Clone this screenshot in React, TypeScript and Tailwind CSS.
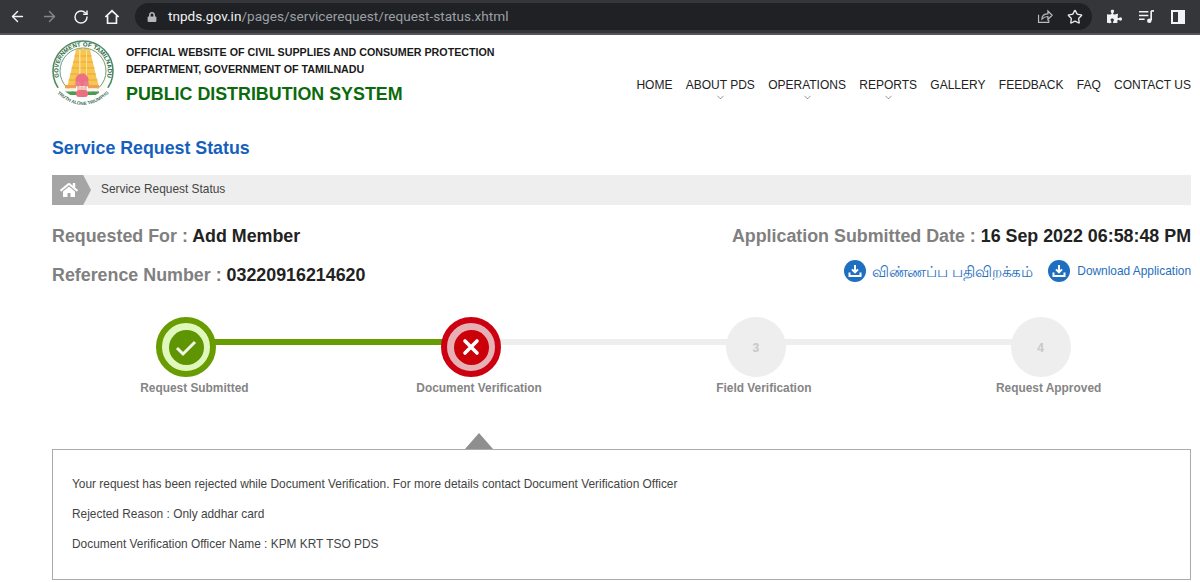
import { ArrowLeft, ArrowRight, ChevronDown, RotateCw, Star } from 'lucide-react';
import { FaHome, FaLock, FaPuzzlePiece } from 'react-icons/fa';

const NAV = [
  { label: 'HOME' },
  { label: 'ABOUT PDS', more: true },
  { label: 'OPERATIONS', more: true },
  { label: 'REPORTS', more: true },
  { label: 'GALLERY' },
  { label: 'FEEDBACK' },
  { label: 'FAQ' },
  { label: 'CONTACT US' },
];

const STEPS = [
  { label: 'Request Submitted', state: 'done' },
  { label: 'Document Verification', state: 'rejected' },
  { label: 'Field Verification', state: '3' },
  { label: 'Request Approved', state: '4' },
];

function Emblem() {
  return (
    <svg viewBox="0 0 64 68" className="w-[64px] h-[68px] shrink-0">
      <defs>
        <path id="emblem-top" d="M11.9 47 A24.8 24.8 0 1 1 50.1 47" />
        <path id="emblem-bottom" d="M4 52 Q31 78 58 52" />
      </defs>
      <circle cx="31" cy="31" r="30" fill="#fbfcf6" stroke="#4f8a68" strokeWidth="1.6" />
      <circle cx="31" cy="31" r="23" fill="#fff" stroke="#6d9c80" strokeWidth="1" />
      <text fontSize="6" fontWeight="700" fill="#2f6b4a" fontFamily="'Liberation Sans', sans-serif" textAnchor="middle">
        <textPath href="#emblem-top" startOffset="50%">GOVERNMENT OF TAMILNADU</textPath>
      </text>
      <path d="M24 9h14l1.5 8 2 8 2 9 3 11H15.5l3-11 2-9 2-8z" fill="#f6c552" />
      <path d="M22.5 16h17M21 22h20M19.5 28h23M18 34h26M16.5 40h29" stroke="#e9ab35" strokeWidth="1.2" />
      <path d="M27 10h1.5v33H27zM34 10h1v33h-1z" fill="#fbe19a" />
      <path d="M13 45h11v3.5H13zM36 45h11v3.5H36z" fill="#f0a050" />
      <path d="M13 48.5h11v3H13zM36 48.5h11v3H36z" fill="#f7f7f0" />
      <path d="M13 51.5h11V55H13zM36 51.5h11V55H36z" fill="#4c9a4f" />
      <circle cx="30" cy="40" r="6.5" fill="#ec6f83" />
      <circle cx="26" cy="44" r="2.8" fill="#e9808f" />
      <circle cx="34" cy="44" r="2.8" fill="#e9808f" />
      <path d="M25 47h10v3H25z" fill="#f3c3b0" />
      <path d="M0 50L8 47Q31 70 54 47L62 50V68H0z" fill="#fff" />
      <rect x="24" y="50" width="12" height="7" rx="3" fill="#e9707f" />
      <text fontSize="4.6" fontWeight="700" fill="#3d6b50" fontFamily="'Liberation Sans', sans-serif" textAnchor="middle">
        <textPath href="#emblem-bottom" startOffset="50%">TRUTH ALONE TRIUMPHS</textPath>
      </text>
    </svg>
  );
}

function DownloadIcon() {
  return (
    <svg viewBox="0 0 22 22" className="w-[22px] h-[22px] shrink-0">
      <circle cx="11" cy="11" r="11" fill="#1f6fc0" />
      <path d="M11 5v7M8 9.4l3 3 3-3" fill="none" stroke="#fff" strokeWidth="2" />
      <path d="M5.5 12.5v3.5h11v-3.5" fill="none" stroke="#fff" strokeWidth="2" />
    </svg>
  );
}

function StepCircle({ state }: { state: string }) {
  if (state === 'done') {
    return (
      <div className="w-[60px] h-[60px] rounded-full border-[6px] border-[#689c00] bg-[#e0f8bb] flex items-center justify-center">
        <div className="w-[35px] h-[35px] rounded-full bg-[#5f9403] flex items-center justify-center">
          <svg viewBox="0 0 24 24" className="w-[24px] h-[24px]">
            <path d="M3 13l6 6L21 7" fill="none" stroke="#f2f7e6" strokeWidth="3" />
          </svg>
        </div>
      </div>
    );
  }
  if (state === 'rejected') {
    return (
      <div className="w-[60px] h-[60px] rounded-full border-[6px] border-[#cc0010] bg-[#e6b0b4] flex items-center justify-center">
        <div className="w-[35px] h-[35px] rounded-full bg-[#cc0008] flex items-center justify-center">
          <svg viewBox="0 0 20 20" className="w-[20px] h-[20px]">
            <path d="M4 4l12 12M16 4L4 16" fill="none" stroke="#fff" strokeWidth="3.6" strokeLinecap="round" />
          </svg>
        </div>
      </div>
    );
  }
  return (
    <div className="w-[60px] h-[60px] rounded-full bg-[#eeeeee] flex items-center justify-center text-[12px] font-bold text-[#c8c8c8] pt-[1px]">
      {state}
    </div>
  );
}

export default function App() {
  return (
    <div className="w-[1200px] h-[582px] overflow-hidden bg-white font-['Liberation_Sans',Arial,sans-serif]">
      <div className="h-[35px] bg-[#35363a] border-b-2 border-[#55565a] flex items-center text-[#f1f3f4]">
        <div className="w-[135px] flex items-center pl-[9px] shrink-0">
          <ArrowLeft size={17} strokeWidth={2} />
          <ArrowRight size={17} strokeWidth={2} className="ml-[15px] text-[#85878a]" />
          <RotateCw size={16} strokeWidth={2.2} className="ml-[15px]" />
          <svg viewBox="0 0 18 18" className="w-[16px] h-[16px] ml-[15px]">
            <path d="M1.5 9L9 2l7.5 7M4 7.5V16h10V7.5" fill="none" stroke="currentColor" strokeWidth="1.9" />
          </svg>
        </div>
        <div className="w-[957px] h-[27px] rounded-full bg-[#202124] flex items-center pl-[12px] pr-[9px] shrink-0">
          <FaLock size={10} className="text-[#b5b7ba]" />
          <div className="ml-[11px] text-[13.6px] font-['Roboto',sans-serif] text-[#9aa0a6]">
            <span className="text-[#f1f3f4]">tnpds.gov.in</span>/pages/servicerequest/request-status.xhtml
          </div>
          <svg viewBox="0 0 20 20" className="w-[17px] h-[17px] ml-auto text-[#b8babd]">
            <path d="M3 8v9h12v-3M7 13c0-4 3-6 7-6V3.5l5 5-5 5V10c-3 0-5 1-7 3z" fill="none" stroke="currentColor" strokeWidth="1.4" />
          </svg>
          <Star size={16} strokeWidth={2} className="ml-[14px] text-[#e8eaed]" />
        </div>
        <FaPuzzlePiece size={15} className="ml-[15px] text-[#f1f3f4]" />
        <svg viewBox="0 0 18 16" className="w-[17px] h-[15px] ml-[16px]">
          <path d="M1 3h10M1 7h10M1 11h6" stroke="#f1f3f4" strokeWidth="1.5" />
          <path d="M14 2v10" stroke="#f1f3f4" strokeWidth="1.8" />
          <path d="M14 2h3" stroke="#f1f3f4" strokeWidth="1.8" />
          <circle cx="12" cy="12.5" r="2.4" fill="#f1f3f4" />
        </svg>
        <div className="w-[14px] h-[14px] ml-[16px] border-2 border-[#f1f3f4] flex justify-end">
          <div className="w-[5px] bg-[#f1f3f4]" />
        </div>
      </div>

      <div className="h-[80px] pl-[52px] pr-[9px] flex">
        <div className="pt-[5px]">
          <Emblem />
        </div>
        <div className="ml-[10px] pt-[9px]">
          <div className="text-[10.7px] leading-[17px] font-bold text-[#1a1a1a]">
            OFFICIAL WEBSITE OF CIVIL SUPPLIES AND CONSUMER PROTECTION
          </div>
          <div className="text-[10.7px] leading-[17px] font-bold text-[#1a1a1a]">
            DEPARTMENT, GOVERNMENT OF TAMILNADU
          </div>
          <div className="text-[17.85px] leading-[24px] mt-[4px] font-bold text-[#0b6a0b]">
            PUBLIC DISTRIBUTION SYSTEM
          </div>
        </div>
        <div className="ml-auto flex gap-[13.3px] pt-[42px] text-[12px] leading-[16px] text-[#222]">
          {NAV.map((n) => (
            <div key={n.label} className="flex flex-col items-center">
              <span>{n.label}</span>
              {n.more && <ChevronDown size={11} strokeWidth={1.5} className="-mt-[1px] text-[#666]" />}
            </div>
          ))}
        </div>
      </div>

      <div className="pl-[52px] pr-[9px]">
        <h1 className="text-[17.8px] leading-[24px] font-bold text-[#1560bd] mt-[21px]">Service Request Status</h1>

        <div className="h-[30px] mt-[15px] bg-[#eeeeee] flex items-center">
          <div className="w-[39px] h-[30px] bg-[#a5a5a5] [clip-path:polygon(0_0,80%_0,100%_50%,80%_100%,0_100%)] flex items-center pl-[8px]">
            <FaHome size={18} className="text-white" />
          </div>
          <span className="ml-[10px] text-[11.9px] text-[#444]">Service Request Status</span>
        </div>

        <div className="flex justify-between text-[17.85px] leading-[24px] font-bold mt-[19px]">
          <div className="text-[#808080]">
            Requested For : <span className="text-[#222]">Add Member</span>
          </div>
          <div className="text-[#808080]">
            Application Submitted Date : <span className="text-[#222]">16 Sep 2022 06:58:48 PM</span>
          </div>
        </div>

        <div className="flex justify-between mt-[15px] h-[28px]">
          <div className="text-[17.85px] leading-[24px] font-bold text-[#808080]">
            Reference Number : <span className="text-[#222]">03220916214620</span>
          </div>
          <div className="flex text-[11.9px] leading-[22px] text-[#1f6fc0] -mt-[3px]">
            <DownloadIcon />
            <span className="ml-[6px] text-[15px] -tracking-[0.1px] font-['Noto_Sans',sans-serif]">விண்ணப்ப பதிவிறக்கம்</span>
            <div className="ml-[15px]">
              <DownloadIcon />
            </div>
            <span className="ml-[7px]">Download Application</span>
          </div>
        </div>

        <div className="relative mt-[26px] flex">
          <div className="absolute left-[134px] top-[22px] w-[284px] h-[6px] bg-[#689c00]" />
          <div className="absolute left-[418px] top-[22px] w-[570px] h-[6px] bg-[#eeeeee]" />
          {STEPS.map((s) => (
            <div key={s.label} className="relative w-[285px] flex flex-col items-center">
              <div className="mr-[16px]">
                <StepCircle state={s.state} />
              </div>
              <div className="mt-[3px] text-[11.9px] leading-[16px] font-bold text-[#858585]">{s.label}</div>
            </div>
          ))}
        </div>

        <div className="relative mt-[53px] h-[131px] border border-[#ababab] pl-[19px] pt-[19px] text-[11.9px] leading-[30px] text-[#444]">
          <div className="absolute -top-[17px] left-[412px] w-[28px] h-[16px] bg-[#8f8f8f] [clip-path:polygon(50%_0,100%_100%,0_100%)]" />
          <div>Your request has been rejected while Document Verification. For more details contact Document Verification Officer</div>
          <div>Rejected Reason : Only addhar card</div>
          <div>Document Verification Officer Name : KPM KRT TSO PDS</div>
        </div>
      </div>
    </div>
  );
}
